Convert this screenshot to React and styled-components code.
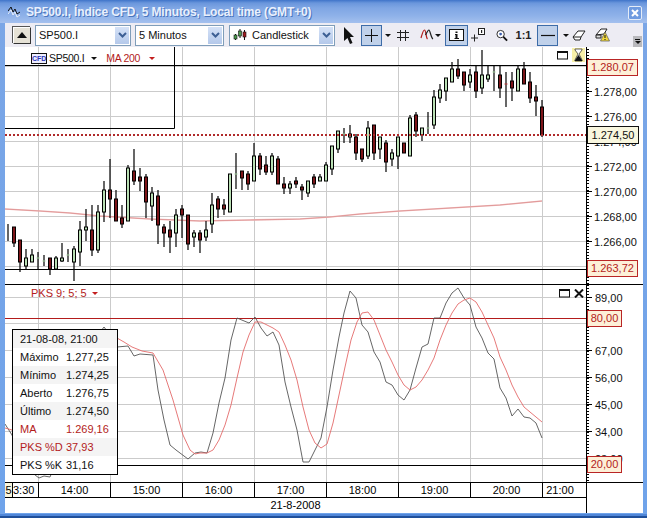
import React from "react";
import styled, { createGlobalStyle } from "styled-components";

const GlobalStyle = createGlobalStyle`
  html, body { margin: 0; padding: 0; background: #fff; }
  body { font-family: "Liberation Sans", Arial, sans-serif; font-size: 11px; }
`;

// x = 8 + 6 * index: [wickTop, wickBottom, bodyTop, bodyBottom, kind]
const candles = [
  [224,241,233,233,"r"],[227,247,227,243,"r"],[240,272,240,262,"r"],[249,269,258,266,"g"],[249,262,255,262,"g"],
  [252,269,258,258,"d"],[255,266,261,261,"d"],[258,275,258,269,"r"],[256,270,258,269,"g"],[243,262,258,261,"g"],
  [249,262,255,255,"d"],[246,281,249,262,"g"],[221,266,230,252,"g"],[209,241,227,230,"g"],[205,256,230,250,"r"],
  [205,253,212,250,"g"],[181,222,190,212,"g"],[159,218,190,199,"r"],[190,221,199,221,"r"],[205,228,218,224,"r"],
  [165,221,168,221,"g"],[149,185,171,181,"r"],[168,191,177,181,"r"],[174,218,177,202,"r"],[187,221,193,206,"g"],
  [190,244,196,225,"r"],[224,247,227,233,"r"],[221,253,230,237,"r"],[209,247,215,233,"g"],[205,238,209,215,"r"],
  [215,250,215,244,"r"],[230,247,233,237,"g"],[230,253,233,240,"r"],[221,241,230,237,"g"],[193,233,205,224,"g"],
  [196,218,199,209,"r"],[199,215,205,209,"r"],[174,212,174,212,"g"],[153,189,174,174,"d"],[171,190,171,178,"r"],
  [171,190,174,184,"r"],[143,181,156,181,"g"],[153,175,156,169,"r"],[156,175,165,172,"r"],[153,175,156,172,"g"],
  [156,184,159,184,"r"],[177,194,184,188,"r"],[181,194,184,188,"g"],[177,188,181,184,"r"],[184,200,187,190,"r"],
  [181,197,181,193,"g"],[174,188,177,184,"r"],[174,181,177,181,"g"],[162,181,165,181,"g"],[146,175,146,169,"g"],
  [131,153,131,149,"g"],[128,143,134,134,"d"],[125,143,134,137,"g"],[134,160,137,153,"r"],[149,162,149,159,"r"],
  [121,159,128,156,"g"],[125,160,125,153,"r"],[137,159,137,149,"g"],[140,172,143,162,"r"],[149,166,153,159,"g"],
  [137,169,137,156,"g"],[143,153,143,153,"r"],[115,156,118,156,"g"],[112,137,115,131,"r"],[128,141,128,135,"g"],
  [112,134,128,128,"d"],[90,129,97,125,"g"],[84,103,90,98,"g"],[78,101,78,91,"g"],[62,82,69,82,"g"],
  [59,79,69,76,"r"],[72,91,72,85,"r"],[69,88,75,82,"g"],[66,98,72,91,"r"],[50,94,75,88,"g"],
  [65,82,75,79,"g"],[66,91,72,72,"d"],[66,98,75,88,"r"],[72,107,84,84,"t"],[72,101,81,88,"r"],
  [66,91,69,91,"g"],[62,84,69,84,"r"],[72,103,82,98,"r"],[85,116,97,101,"r"],[100,137,107,135,"r"],
];

const maLine = "5,209 40,211 70,213 100,216 150,219 200,221 250,220 300,219 330,217 360,214 400,211 450,208 500,205 542,201";

const kLine = [
  [5,424],[12,435],[18,450],[26,468],[39,478],[44,476],[50,477],[56,462],[62,430],[74,395],[86,360],[98,335],[104,327],[110,335],
  [117,347],[128,346],[134,356],[140,354],[153,355],[158,390],[164,420],[170,445],[176,450],[188,459],[195,453],[201,452],[207,453],
  [213,433],[219,403],[225,378],[231,340],[237,318],[249,323],[255,317],[261,328],[267,336],[273,332],[279,345],[285,382],[291,407],
  [297,430],[303,462],[309,462],[315,450],[321,438],[327,407],[333,370],[339,337],[344,313],[350,291],[356,298],[362,325],[368,332],
  [374,352],[380,362],[386,382],[392,385],[398,395],[404,400],[410,390],[416,368],[422,347],[428,344],[434,318],[440,318],[446,303],
  [452,293],[458,288],[464,298],[470,305],[476,327],[482,338],[488,353],[494,359],[500,388],[506,398],[512,416],[518,409],[524,417],
  [530,418],[536,423],[542,438],
];
const dLine = [
  [5,428],[12,430],[24,445],[36,460],[50,462],[62,448],[74,415],[86,380],[98,350],[110,340],[117,338],[124,342],[132,347],[142,351],
  [153,353],[163,370],[173,400],[183,435],[190,450],[195,454],[200,453],[207,453],[213,450],[219,440],[225,425],[231,405],[237,378],
  [243,352],[249,335],[255,322],[261,322],[267,325],[273,328],[279,332],[285,345],[291,360],[297,380],[303,407],[309,430],[315,443],
  [321,448],[327,444],[333,423],[339,395],[345,367],[351,340],[357,322],[362,313],[368,312],[374,320],[380,335],[386,350],[392,362],
  [398,375],[404,385],[410,390],[416,387],[422,380],[428,370],[434,358],[440,340],[446,325],[452,313],[458,304],[464,300],[470,298],
  [476,302],[482,312],[488,325],[494,338],[500,357],[506,370],[512,385],[518,397],[524,407],[530,412],[536,417],[542,422],
];
const toPoints = (list) => list.map((p) => p.join(",")).join(" ");

const vGrid = [38, 110, 182, 254, 326, 398, 470, 542];
const priceGrid = [66, 91, 116, 141, 166, 191, 216, 241, 266];
const priceTicks = [
  [91, "1.278,00"], [116, "1.276,00"], [141, "1.274,00"], [166, "1.272,00"],
  [191, "1.270,00"], [216, "1.268,00"], [241, "1.266,00"],
];
const pksGrid = [297, 323, 350, 377, 404, 431, 458];
const pksTicks = [
  [297, "89,00"], [350, "67,00"], [377, "56,00"], [404, "45,00"], [431, "34,00"], [458, "23,00"],
];

const range = (from, to, step) => {
  const out = [];
  for (let v = from; v < to; v += step) out.push(v);
  return out;
};
const minorPath = (from, to, step) =>
  range(from, to, step).map((y) => `M586 ${Math.round(y) + 0.5}h3`).join("");

const rows = [
  { label: "21-08-08, 21:00", value: "" },
  { label: "Máximo", value: "1.277,25" },
  { label: "Mínimo", value: "1.274,25" },
  { label: "Aberto", value: "1.276,75" },
  { label: "Último", value: "1.274,50" },
  { label: "MA", value: "1.269,16", red: true },
  { label: "PKS %D", value: "37,93", red: true },
  { label: "PKS %K", value: "31,16" },
];

const Window = styled.div`
  width: 647px;
  height: 518px;
  box-sizing: border-box;
  overflow: hidden;
  padding: 0 4px 6px 5px;
  display: flex;
  flex-direction: column;
  background: linear-gradient(#7ba6e6, #6fa3ea);
  box-shadow: inset 0 -2px 0 #1f4f9a, inset 0 -4px 0 #4f86d8;
`;

const TitleBar = styled.div`
  height: 23px;
  box-sizing: border-box;
  margin: 0 -4px 0 -5px;
  padding: 1px 5px 0 8px;
  display: flex;
  align-items: center;
  flex: none;
  background: linear-gradient(#3f74c9 0, #6a96dc 3px, #7fa6e4 8px, #8fb2e9 16px, #a4c0ee 23px);
`;

const TitleText = styled.span`
  margin-left: 5px;
  flex: 1;
  color: #e9f0fd;
  font-size: 12px;
  font-weight: bold;
  letter-spacing: -0.14px;
  white-space: nowrap;
  text-shadow: 1px 1px 0 #4a76bd;
`;

const CloseButton = styled.div`
  width: 12px;
  height: 12px;
  margin-top: 1px;
  display: flex;
  align-items: center;
  justify-content: center;
  border: 1px solid #e4ecf8;
  border-radius: 2px;
  background: #6f9be0;
`;

const Toolbar = styled.div`
  height: 24px;
  flex: none;
  display: flex;
  align-items: center;
  position: relative;
  padding-left: 8px;
  background: #edecf3;
`;

const CollapseButton = styled.div`
  width: 16px;
  height: 15px;
  display: flex;
  align-items: center;
  justify-content: center;
  background: #e6e2d6;
  border: 1px solid;
  border-color: #fff #333 #333 #fff;
  box-shadow: -1px -1px 0 #555;
`;

const Combo = styled.div`
  width: ${(p) => p.$w}px;
  height: 21px;
  margin-left: ${(p) => p.$gap}px;
  box-sizing: border-box;
  display: flex;
  align-items: center;
  flex: none;
  padding-left: 3px;
  border: 1px solid #7f9db9;
  background: #fff;
  font-size: 11px;
  color: #111;
`;

const ComboLabel = styled.span`
  flex: 1;
  white-space: nowrap;
`;

const ComboArrow = styled.span`
  width: 16px;
  height: 19px;
  display: flex;
  align-items: center;
  justify-content: center;
  background: linear-gradient(#d5e2f7, #b4c8ea);
  border: 1px solid #fff;
  box-sizing: border-box;
`;

const Tool = styled.div`
  width: ${(p) => p.$w}px;
  height: 21px;
  margin-left: ${(p) => p.$gap || 0}px;
  flex: none;
  box-sizing: border-box;
  display: flex;
  align-items: center;
  justify-content: center;
  font-size: 11px;
  font-weight: bold;
  color: #222;
  background: ${(p) => (p.$active ? "#c0d1ea" : "transparent")};
  border: ${(p) => (p.$active ? "1px solid #3d6ca8" : "none")};
`;

const Caret = styled.span`
  flex: none;
  width: 0;
  height: 0;
  margin-left: ${(p) => p.$gap || 0}px;
  border-left: 3px solid transparent;
  border-right: 3px solid transparent;
  border-top: 3px solid ${(p) => p.$color || "#111"};
`;

const Overflow = styled.div`
  position: absolute;
  right: 1px;
  bottom: 0;
  width: 9px;
  height: 11px;
  background: #b9b9bd;
  display: flex;
  flex-direction: column;
  align-items: center;
  justify-content: center;
  gap: 1px;
`;

const Dash = styled.span`
  width: 5px;
  height: 1px;
  background: #111;
`;

const ChartArea = styled.div`
  position: relative;
  flex: none;
  background: #fff;
`;

const Pane = styled.div`
  position: relative;
  height: ${(p) => p.$h}px;
  border-top: ${(p) => (p.$ruled ? "1px solid #000" : "none")};
`;

const PlotSvg = styled.svg`
  display: block;
  font-family: "Liberation Sans", Arial, sans-serif;
  font-size: 11px;
  fill: #111;
`;

const Legend = styled.div`
  position: absolute;
  left: 26px;
  top: ${(p) => p.$top}px;
  display: flex;
  align-items: center;
  height: 12px;
  white-space: nowrap;
`;

const CfdTag = styled.span`
  width: 14px;
  height: 9px;
  margin-right: 2px;
  border: 1px solid #111;
  font-size: 7px;
  line-height: 9px;
  font-weight: bold;
  text-align: center;
  color: #2a35b8;
  background: #eef;
`;

const LegendText = styled.span`
  margin-left: ${(p) => p.$gap || 0}px;
  color: ${(p) => p.$color || "#111"};
  font-size: ${(p) => (p.$tight ? "10.5px" : "11px")};
  letter-spacing: ${(p) => (p.$tight ? "-0.3px" : "0")};
`;

const PaneIcons = styled.div`
  position: absolute;
  right: ${(p) => p.$right}px;
  top: ${(p) => p.$top}px;
  display: flex;
  align-items: center;
  gap: 3px;
`;

const Badge = styled.div`
  position: absolute;
  left: 582px;
  top: ${(p) => p.$top}px;
  height: ${(p) => p.$h || 17}px;
  box-sizing: border-box;
  padding: 0 2px;
  line-height: ${(p) => (p.$h || 17) - 2}px;
  text-align: center;
  width: ${(p) => p.$w}px;
  color: ${(p) => (p.$dark ? "#111" : "#b31b1b")};
  background: ${(p) => (p.$dark ? "#f9f7df" : "#fdf0d8")};
  border: 1px solid ${(p) => (p.$dark ? "#111" : "#b92525")};
`;

const DataBox = styled.div`
  position: absolute;
  left: 7px;
  top: 282px;
  width: 106px;
  box-sizing: border-box;
  border: 1px solid #000;
  background: #fff;
`;

const DataRow = styled.div`
  height: 18px;
  display: flex;
  align-items: center;
  padding-left: 7px;
  white-space: nowrap;
  color: ${(p) => (p.$red ? "#b31b1b" : "#111")};
  background: ${(p) => (p.$odd ? "#f4f4f4" : "#fff")};
`;

const DataLabel = styled.span`
  width: ${(p) => (p.$wide ? "auto" : "46px")};
`;

const Footer = styled.div`
  flex: 1;
  display: flex;
  border-top: 1px solid #000;
  background: #fff;
`;

const FooterAxis = styled.div`
  width: 581px;
  border-right: 1px solid #000;
`;

const TimeRow = styled.div`
  height: 14px;
  display: flex;
  border-bottom: 1px solid #000;
`;

const TimeCell = styled.div`
  width: ${(p) => p.$w}px;
  box-sizing: border-box;
  flex: none;
  line-height: 14px;
  text-align: ${(p) => p.$align || "center"};
  padding-right: ${(p) => (p.$last ? "9px" : "0")};
  border-right: ${(p) => (p.$last ? "none" : "1px solid #000")};
  background: ${(p) => (p.$pale ? "#fbf6dc" : "transparent")};
  overflow: hidden;
  white-space: nowrap;
`;

const DateRow = styled.div`
  height: 15px;
  line-height: 15px;
  text-align: center;
`;

const WindowGlyph = () => (
  <svg width="12" height="9" viewBox="0 0 12 9">
    <rect x=".5" y=".5" width="10" height="7.5" fill="#fff" stroke="#111" />
    <rect x="0" y="0" width="11" height="2" fill="#111" />
  </svg>
);

const Chevron = () => (
  <ComboArrow>
    <svg width="9" height="6" viewBox="0 0 9 6">
      <path d="M1 1l3.5 3.5L8 1" fill="none" stroke="#3d5f94" strokeWidth="2" />
    </svg>
  </ComboArrow>
);

export default function App() {
  return (
    <Window>
      <GlobalStyle />
      <TitleBar>
        <svg width="13" height="13" viewBox="0 0 13 13">
          <path d="M0 5l3-4 2 5 2-3 2 5 3-2" fill="none" stroke="#111" strokeWidth="1" />
          <path d="M0 8l3-4 2 5 2-3 2 5 3-2" fill="none" stroke="#e8eefa" strokeWidth="1" />
        </svg>
        <TitleText>SP500.I, Índice CFD, 5 Minutos, Local time (GMT+0)</TitleText>
        <CloseButton>
          <svg width="8" height="8" viewBox="0 0 8 8">
            <path d="M1 1l6 6M7 1L1 7" stroke="#fff" strokeWidth="2" />
          </svg>
        </CloseButton>
      </TitleBar>

      <Toolbar>
        <CollapseButton>
          <svg width="10" height="6" viewBox="0 0 10 6"><path d="M5 0l5 6H0z" fill="#111" /></svg>
        </CollapseButton>
        <Combo $w={96} $gap={4}>
          <ComboLabel>SP500.I</ComboLabel>
          <Chevron />
        </Combo>
        <Combo $w={89} $gap={4}>
          <ComboLabel>5 Minutos</ComboLabel>
          <Chevron />
        </Combo>
        <Combo $w={106} $gap={5}>
          <svg width="14" height="12" viewBox="0 0 14 12" style={{ marginRight: 5, flex: "none" }}>
            <path d="M2.5 5v6M7 0v9M11.5 1v10" stroke="#111" />
            <rect x="1" y="6" width="3" height="4" fill="#4d9b50" stroke="#111" strokeWidth=".6" />
            <rect x="5.5" y="2" width="3" height="5" fill="#4d9b50" stroke="#111" strokeWidth=".6" />
            <rect x="10" y="3" width="3" height="5" fill="#a01f22" stroke="#111" strokeWidth=".6" />
          </svg>
          <ComboLabel>Candlestick</ComboLabel>
          <Chevron />
        </Combo>

        <Tool $w={12} $gap={8}>
          <svg width="12" height="17" viewBox="0 0 12 17"><path d="M1 0v14l3.5-3 2.5 6 2.5-1-2.5-6H11z" fill="#111" /></svg>
        </Tool>
        <Tool $w={21} $gap={6} $active>
          <svg width="13" height="13" viewBox="0 0 13 13"><path d="M6.5 0v13M0 6.500h13" stroke="#111" /></svg>
        </Tool>
        <Caret $gap={3} />
        <Tool $w={12} $gap={6}>
          <svg width="12" height="11" viewBox="0 0 12 11"><path d="M3.500 0v11M8.500 0v11M0 2.500h12M0 7.500h12" stroke="#222" /></svg>
        </Tool>
        <Tool $w={14} $gap={11}>
          <svg width="14" height="12" viewBox="0 0 14 12">
            <path d="M1 9C2 6 3 1 4.500 1S6 9 7.500 10" fill="none" stroke="#b31b1b" strokeWidth="1.200" />
            <path d="M5.500 6C7 3 8 1 9 1s2 8 4 9" fill="none" stroke="#222" strokeWidth="1.200" />
          </svg>
        </Tool>
        <Caret $gap={1} />
        <Tool $w={23} $gap={4} $active>
          <svg width="15" height="12" viewBox="0 0 15 12">
            <rect x=".5" y=".5" width="14" height="11" fill="#fff" stroke="#111" />
            <path d="M6.500 2.500h2v1.500h-2zM6 5h2.500v4H10v1H5.500V9H6.500V6H6z" fill="#111" />
          </svg>
        </Tool>
        <Tool $w={14} $gap={3}>
          <svg width="14" height="14" viewBox="0 0 14 14">
            <path d="M0 10h7M3.500 6.500v7" stroke="#222" />
            <rect x="7.500" y=".5" width="6" height="6" fill="#fff" stroke="#222" />
            <path d="M10 2h1.200v3H10z" fill="#222" />
          </svg>
        </Tool>
        <Tool $w={12} $gap={11}>
          <svg width="13" height="13" viewBox="0 0 13 13">
            <circle cx="5" cy="5" r="4" fill="#fff" stroke="#222" />
            <circle cx="5" cy="5" r="1.500" fill="#3d5fb0" />
            <path d="M8 8l4 4" stroke="#111" strokeWidth="2" />
          </svg>
        </Tool>
        <Tool $w={13} $gap={9}>1:1</Tool>
        <Tool $w={21} $gap={7} $active>
          <svg width="14" height="3" viewBox="0 0 14 3"><path d="M0 1.500h14" stroke="#111" strokeWidth="1.200" /></svg>
        </Tool>
        <Caret $gap={5} />
        <Tool $w={14} $gap={3}>
          <svg width="14" height="11" viewBox="0 0 14 11">
            <path d="M1 7l5-6h7l-4 6-1 3H3z" fill="#fff" stroke="#222" />
            <path d="M1 7h8" stroke="#222" />
          </svg>
        </Tool>
        <Tool $w={15} $gap={9}>
          <svg width="15" height="14" viewBox="0 0 15 14">
            <path d="M1 7l5-6h6l-3 5z" fill="#fff" stroke="#222" />
            <path d="M1 7h5v3H1z" fill="#ddd" stroke="#222" />
            <path d="M10 4l4.500 9h-9z" fill="#f2d93c" stroke="#555" strokeWidth=".7" />
            <path d="M10 7v3M10 11v1" stroke="#111" />
          </svg>
        </Tool>
        <Overflow>
          <Dash />
          <Caret />
        </Overflow>
      </Toolbar>

      <ChartArea>
        <Pane $h={237}>
          <PlotSvg width="638" height="237" viewBox="5 47 638 237">
            {priceGrid.map((y) => (
              <line key={y} x1="5" x2="586" y1={y + 0.5} y2={y + 0.5} stroke="#cbcbcb" />
            ))}
            {vGrid.map((x) => (
              <line key={x} x1={x + 0.5} x2={x + 0.5} y1="47" y2="284" stroke="#cbcbcb" />
            ))}
            <polyline points={maLine} fill="none" stroke="#f0bcbc" strokeWidth="1.600" />
            <polyline points={maLine} fill="none" stroke="#b93a3a" strokeWidth=".6" opacity=".45" />
            <path d="M5 65.500H586M5 128.500H174.500V47M5 269.500H586" fill="none" stroke="#000" />
            {candles.map(([wt, wb, bt, bb, kind], i) => {
              const x = 8 + 6 * i;
              return (
                <g key={x}>
                  <line x1={x} x2={x} y1={wt} y2={wb} stroke="#000" strokeWidth="1.200" />
                  {kind === "d" || kind === "t" ? (
                    <line x1={x - 1.5} x2={x + 1.5} y1={bt} y2={bt} stroke={kind === "d" ? "#9fcf9a" : "#b33"} />
                  ) : (
                    <rect x={x - 1.5} y={bt} width="3" height={bb - bt} fill={kind === "g" ? "#b9dfb4" : "#7d1519"} stroke="#000" />
                  )}
                </g>
              );
            })}
            <line x1="5" x2="586" y1="135" y2="135" stroke="#b02a2a" strokeWidth="2" strokeDasharray="2 2" />
            <line x1="586.500" x2="586.500" y1="47" y2="284" stroke="#000" />
            <path d={minorPath(49, 284, 3.125)} stroke="#000" fill="none" />
            {priceTicks.map(([y, text]) => (
              <g key={y}>
                <line x1="586" x2="592" y1={y + 0.5} y2={y + 0.5} stroke="#000" />
                <text x="594" y={y + 4.5}>{text}</text>
              </g>
            ))}
          </PlotSvg>
          <Legend $top={5}>
            <CfdTag>CFD</CfdTag>
            <LegendText $tight>SP500.I</LegendText>
            <Caret $gap={7} />
            <LegendText $tight $gap={9} $color="#b31b1b">MA 200</LegendText>
            <Caret $gap={9} $color="#c41e1e" />
          </Legend>
          <PaneIcons $right={58} $top={1}>
            <WindowGlyph />
            <svg width="13" height="14" viewBox="0 0 13 14">
              <rect x="0" y="0" width="13" height="14" fill="#f8f0a8" />
              <path d="M3 1h7v1L7 6l3 6v1H3v-1l3-6-3-4z" fill="#fff" stroke="#222" strokeWidth=".7" />
              <path d="M2.500 13l4-6 4 6z" fill="#111" />
            </svg>
          </PaneIcons>
          <Badge $top={12} $w={51}>1.280,07</Badge>
          <Badge $top={79} $w={52} $h={18} $dark>1.274,50</Badge>
          <Badge $top={213} $w={51}>1.263,72</Badge>
        </Pane>

        <Pane $h={197} $ruled>
          <PlotSvg width="638" height="197" viewBox="5 285 638 197">
            {pksGrid.map((y) => (
              <line key={y} x1="5" x2="586" y1={y + 0.5} y2={y + 0.5} stroke="#cbcbcb" />
            ))}
            {vGrid.map((x) => (
              <line key={x} x1={x + 0.5} x2={x + 0.5} y1="285" y2="482" stroke="#cbcbcb" />
            ))}
            <line x1="5" x2="586" y1="318.500" y2="318.500" stroke="#b31b1b" />
            <line x1="5" x2="586" y1="465.500" y2="465.500" stroke="#000" />
            <polyline points={toPoints(kLine)} fill="none" stroke="#555" strokeWidth=".9" />
            <polyline points={toPoints(dLine)} fill="none" stroke="#e36a6a" strokeWidth=".9" />
            <line x1="586.500" x2="586.500" y1="285" y2="482" stroke="#000" />
            <path d={minorPath(285, 482, 3)} stroke="#000" fill="none" />
            {pksTicks.map(([y, text]) => (
              <g key={y}>
                <line x1="586" x2="592" y1={y + 0.5} y2={y + 0.5} stroke="#000" />
                <text x="595" y={y + 4.5}>{text}</text>
              </g>
            ))}
          </PlotSvg>
          <Legend $top={2}>
            <LegendText $color="#b31b1b">PKS 9; 5; 5</LegendText>
            <Caret $gap={5} $color="#c41e1e" />
          </Legend>
          <PaneIcons $right={59} $top={4}>
            <WindowGlyph />
            <svg width="10" height="9" viewBox="0 0 10 9"><path d="M1 .5l8 8M9 .5l-8 8" stroke="#111" strokeWidth="2" /></svg>
          </PaneIcons>
          <Badge $top={25} $w={35}>80,00</Badge>
          <Badge $top={171} $w={35}>20,00</Badge>
        </Pane>

        <DataBox>
          {rows.map((row, i) => (
            <DataRow key={row.label} $red={row.red} $odd={i % 2 === 0}>
              <DataLabel $wide={!row.value}>{row.label}</DataLabel>
              {row.value && <span>{row.value}</span>}
            </DataRow>
          ))}
        </DataBox>
      </ChartArea>

      <Footer>
        <FooterAxis>
          <TimeRow>
            <TimeCell $w={8} $pale>5</TimeCell>
            <TimeCell $w={26} $align="left">3:30</TimeCell>
            {["14:00", "15:00", "16:00", "17:00", "18:00", "19:00", "20:00"].map((t) => (
              <TimeCell key={t} $w={72}>{t}</TimeCell>
            ))}
            <TimeCell $w={43} $last>21:00</TimeCell>
          </TimeRow>
          <DateRow>21-8-2008</DateRow>
        </FooterAxis>
      </Footer>
    </Window>
  );
}
